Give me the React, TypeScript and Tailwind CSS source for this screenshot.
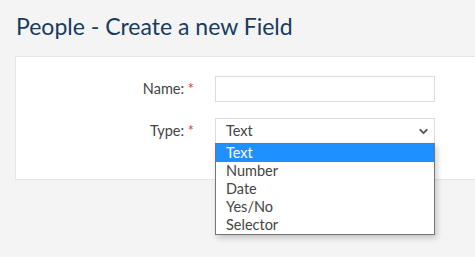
import { ChevronDown } from "lucide-react";

const options = ["Text", "Number", "Date", "Yes/No", "Selector"];

export default function App() {
  return (
    <div
      className="min-h-[257px] bg-[#f4f4f4] pt-[11px] pl-[15px]"
      style={{ fontFamily: "Lato, 'Liberation Sans', sans-serif" }}
    >
      <h1 className="pl-px text-[23px] leading-[30px] text-[#183b5e] mb-[15px]">
        People - Create a new Field
      </h1>

      <div className="bg-white border border-r-0 border-[#e6e6e6] h-[124px] pt-[19px]">
        {/* Name */}
        <div className="flex items-center h-[26px]">
          <label className="w-[178px] text-right text-[14.5px] text-[#444]">
            Name: <span className="text-[#e53935]">*</span>
          </label>
          <input className="ml-[21px] w-[220px] h-[26px] border border-[#dcdcdc] bg-white outline-none" />
        </div>

        {/* Type */}
        <div className="flex items-center h-[26px] mt-[16px]">
          <label className="w-[178px] text-right text-[14.5px] text-[#444]">
            Type: <span className="text-[#e53935]">*</span>
          </label>
          <div className="relative ml-[21px] w-[220px]">
            <div className="flex items-center justify-between h-[26px] border border-[#dcdcdc] bg-white pl-[10px] pr-[4px] text-[14.5px] text-[#444]">
              <span>Text</span>
              <ChevronDown size={13} strokeWidth={3.5} className="text-[#555]" />
            </div>
            {/* Open option list */}
            <div className="absolute left-0 top-[25px] w-[220px] bg-white border border-[#767676] shadow-[2px_3px_6px_rgba(0,0,0,0.2)] z-10">
              {options.map((o, i) => (
                <div
                  key={o}
                  className={`h-[18px] leading-[17px] pl-[10px] text-[14.5px] ${
                    i === 0 ? "bg-[#1e90ff] text-white" : "text-[#444]"
                  }`}
                >
                  {o}
                </div>
              ))}
            </div>
          </div>
        </div>
      </div>
    </div>
  );
}
